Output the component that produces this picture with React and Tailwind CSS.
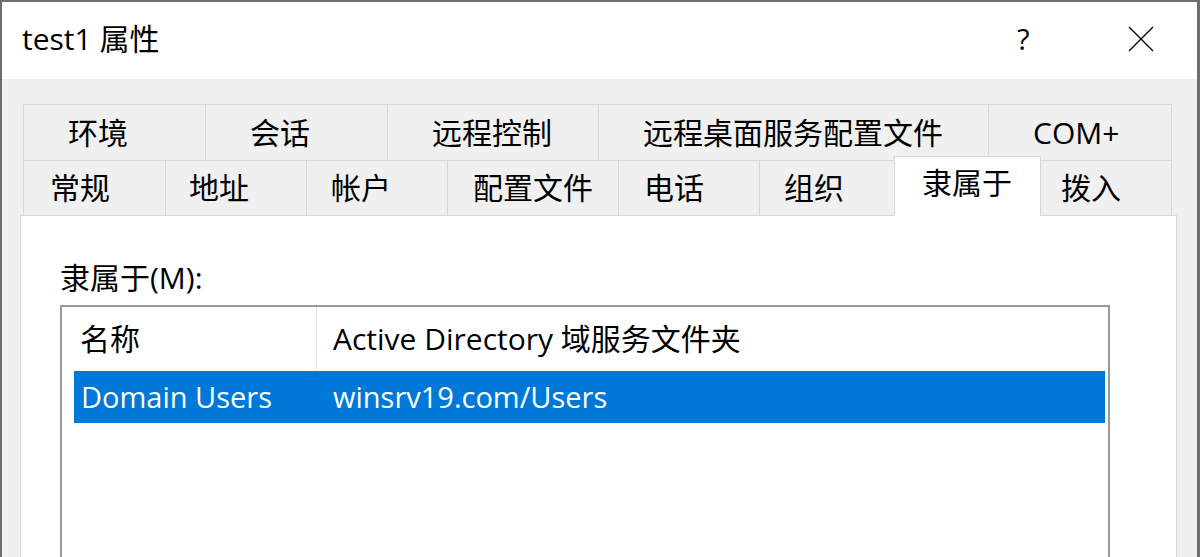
const FONT = "font-['Open_Sans','Noto_Sans_CJK_SC',sans-serif]";

const topTabs = [
  { label: "环境", w: "w-[182px]" },
  { label: "会话", w: "w-[182px]" },
  { label: "远程控制", w: "w-[211px]" },
  { label: "远程桌面服务配置文件", w: "w-[390px]" },
  { label: "COM+", w: "w-[184px]" },
];

const bottomTabs = [
  { label: "常规", w: "w-[142px]", pl: "pl-[26px]" },
  { label: "地址", w: "w-[141px]", pl: "pl-[23px]" },
  { label: "帐户", w: "w-[141px]", pl: "pl-[24px]" },
  { label: "配置文件", w: "w-[171px]", pl: "pl-[25px]" },
  { label: "电话", w: "w-[141px]", pl: "pl-[25px]" },
  { label: "组织", w: "w-[135px]", pl: "pl-[24px]" },
  { label: "隶属于", w: "w-[147px]", pl: "pl-[27px]", active: true },
  { label: "拨入", w: "w-[131px]", pl: "pl-[20px]" },
];

function CloseIcon() {
  return (
    <svg width="26" height="26" viewBox="0 0 26 26" fill="none">
      <path d="M1 1L25 25M25 1L1 25" stroke="#000" strokeWidth="1.3" />
    </svg>
  );
}

export default function App() {
  return (
    <div
      className={`h-[557px] w-[1200px] overflow-hidden bg-[#6e6e6e] pt-[2px] pl-[2px] pr-[3px] text-[30px] leading-[36px] text-black ${FONT}`}
    >
      <div className="flex h-full flex-col">
        {/* title bar */}
        <div className="flex h-[77px] shrink-0 items-center bg-white pl-[20px]">
          <span className="-mt-[4px]">test1 属性</span>
          <span className="ml-auto -mt-[4px] w-[20px] pl-[2px] text-[29px]">?</span>
          <div className="ml-[93px] mr-[43px] -mt-[3px]">
            <CloseIcon />
          </div>
        </div>

        {/* body */}
        <div className="flex flex-1 flex-col bg-[#f0f0f0] pt-[25px] pl-[18px]">
          <div className="pl-[3px]">
            <div className="flex h-[56px]">
              {topTabs.map((t, i) => (
                <div
                  key={t.label}
                  className={`flex ${t.w} items-center border-t border-l border-[#d9d9d9] pl-[44px] ${
                    i === topTabs.length - 1 ? "border-r" : ""
                  }`}
                >
                  {t.label}
                </div>
              ))}
            </div>
            <div className="flex h-[55px] items-end">
              {bottomTabs.map((t, i) =>
                t.active ? (
                  <div
                    key={t.label}
                    className={`relative z-10 -mb-[1px] flex h-[60px] ${t.w} items-center border-t border-l border-r border-[#d9d9d9] bg-white pb-[7px] ${t.pl}`}
                  >
                    {t.label}
                  </div>
                ) : (
                  <div
                    key={t.label}
                    className={`flex h-[55px] ${t.w} items-center border-t border-l border-[#d9d9d9] ${t.pl} ${
                      i === bottomTabs.length - 1 ? "border-r" : ""
                    } ${bottomTabs[i - 1]?.active ? "border-l-0" : ""}`}
                  >
                    {t.label}
                  </div>
                )
              )}
            </div>
          </div>

          {/* panel */}
          <div className="flex w-[1157px] flex-1 flex-col border-t border-l border-r border-[#d9d9d9] bg-white pt-[44px] pl-[39px]">
            <div>隶属于(M):</div>
            <div className="mt-[9px] w-[1050px] flex-1 border-2 border-b-0 border-[#9a9a9a]">
              <div className="flex h-[64px] items-center">
                <div className="flex h-full w-[255px] items-center border-r border-[#e5e5e5] pl-[18px]">
                  名称
                </div>
                <div className="pl-[16px]">Active Directory 域服务文件夹</div>
              </div>
              <div className="ml-[12px] mr-[3px] flex h-[52px] items-center bg-[#0078d7] text-[29px] text-white">
                <div className="w-[259px] pl-[7px]">Domain Users</div>
                <div>winsrv19.com/Users</div>
              </div>
            </div>
          </div>
        </div>
      </div>
    </div>
  );
}
